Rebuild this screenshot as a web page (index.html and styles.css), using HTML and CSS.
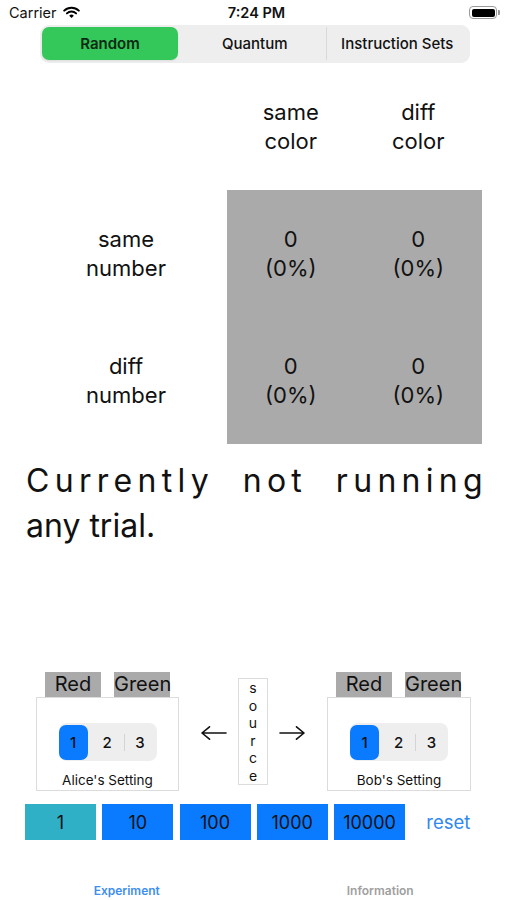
FILE: index.html
```html
<!DOCTYPE html>
<html>
<head>
<meta charset="utf-8">
<link rel="stylesheet" href="styles.css">
</head>
<body>
<div class="screen">
  <div class="status">
    <div class="status-left">
      <span class="carrier">Carrier</span>
      <svg class="wifi" width="17" height="12" viewBox="0 0 17 12">
        <path d="M1.2 4.6 A10.5 10.5 0 0 1 15.8 4.6" fill="none" stroke="#000" stroke-width="2" stroke-linecap="round"/>
        <path d="M3.9 7.4 A6.6 6.6 0 0 1 13.1 7.4" fill="none" stroke="#000" stroke-width="2" stroke-linecap="round"/>
        <path d="M6.2 9.7 A3.3 3.3 0 0 1 10.8 9.7 L8.5 12 Z" fill="#000"/>
      </svg>
    </div>
    <div class="clock">7:24 PM</div>
    <div class="status-right">
      <div class="battery"><div class="battery-fill"></div></div>
      <div class="battery-cap"></div>
    </div>
  </div>

  <div class="seg-wrap">
    <div class="seg">
      <div class="seg-item active">Random</div>
      <div class="seg-item">Quantum</div>
      <div class="seg-item divided">Instruction Sets</div>
    </div>
  </div>

  <div class="matrix">
    <div class="cell"></div>
    <div class="cell head">same<br>color</div>
    <div class="cell head">diff<br>color</div>
    <div class="cell head">same<br>number</div>
    <div class="cell data">0<br>(0%)</div>
    <div class="cell data">0<br>(0%)</div>
    <div class="cell head">diff<br>number</div>
    <div class="cell data">0<br>(0%)</div>
    <div class="cell data">0<br>(0%)</div>
  </div>

  <div class="trial">
    <div class="trial-line1"><span>Currently</span><span>not</span><span>running</span></div>
    <div class="trial-line2">any trial.</div>
  </div>

  <div class="spacer"></div>

  <div class="controls">
    <div class="panel">
      <div class="tags"><span class="tag">Red</span><span class="tag">Green</span></div>
      <div class="card">
        <div class="mini-seg">
          <div class="mini-item on">1</div>
          <div class="mini-item">2</div>
          <div class="mini-item sep">3</div>
        </div>
        <div class="card-label">Alice's Setting</div>
      </div>
    </div>
    <div class="middle">
      <svg class="arrow" width="26" height="14" viewBox="0 0 26 14">
        <path d="M1 7 H25 M8.5 0.8 L1 7 L8.5 13.2" fill="none" stroke="#111" stroke-width="1.6" stroke-linecap="round" stroke-linejoin="round"/>
      </svg>
      <div class="source">s<br>o<br>u<br>r<br>c<br>e</div>
      <svg class="arrow" width="26" height="14" viewBox="0 0 26 14">
        <path d="M1 7 H25 M17.5 0.8 L25 7 L17.5 13.2" fill="none" stroke="#111" stroke-width="1.6" stroke-linecap="round" stroke-linejoin="round"/>
      </svg>
    </div>
    <div class="panel bob">
      <div class="tags"><span class="tag">Red</span><span class="tag">Green</span></div>
      <div class="card">
        <div class="mini-seg">
          <div class="mini-item on">1</div>
          <div class="mini-item">2</div>
          <div class="mini-item sep">3</div>
        </div>
        <div class="card-label">Bob's Setting</div>
      </div>
    </div>
  </div>

  <div class="runs">
    <div class="run teal">1</div>
    <div class="run">10</div>
    <div class="run">100</div>
    <div class="run">1000</div>
    <div class="run">10000</div>
    <div class="reset">reset</div>
  </div>

  <div class="tabbar">
    <div class="tab active">Experiment</div>
    <div class="tab">Information</div>
  </div>
</div>
</body>
</html>
```

FILE: styles.css
```css
* { box-sizing: border-box; }
html, body { margin: 0; padding: 0; background: #fff; }
body {
  font-family: Inter, "Liberation Sans", sans-serif;
  color: #111;
}
.screen {
  width: 507px;
  height: 900px;
  display: flex;
  flex-direction: column;
  overflow: hidden;
}

/* status bar */
.status {
  height: 25px;
  display: flex;
  align-items: center;
  justify-content: space-between;
  padding: 0 7px 0 9px;
}
.status-left { display: flex; align-items: center; width: 120px; }
.carrier { font-size: 14.5px; color: #111; }
.wifi { margin-left: 6px; margin-top: -1px; }
.clock { font-size: 14.5px; font-weight: 600; color: #111; margin-left: 4px; }
.status-right { width: 120px; display: flex; justify-content: flex-end; align-items: center; }
.battery {
  width: 28px; height: 13px;
  border: 1px solid #9a9a9a;
  border-radius: 4px;
  padding: 1.5px;
}
.battery-fill { width: 100%; height: 100%; background: #000; border-radius: 2px; }
.battery-cap { width: 2px; height: 4.5px; background: #9a9a9a; border-radius: 0 1px 1px 0; margin-left: 1px; }

/* top segmented control */
.seg-wrap { padding: 0 37px 0 40px; }
.seg {
  height: 38px;
  background: #eeeeef;
  border-radius: 9px;
  display: flex;
  padding: 2px 2px 3px;
}
.seg-item {
  flex: 1;
  display: flex;
  align-items: center;
  justify-content: center;
  font-size: 15px;
  font-weight: 500;
  color: #111;
  border-radius: 7px;
}
.seg-item.active {
  flex: 0 0 136px;
  background: #34c759;
  font-weight: 600;
  color: #0d2a14;
  margin-right: 6px;
  box-shadow: 0 1px 2px rgba(0,0,0,0.08);
}
.seg-item.divided { border-left: 1px solid #d9d9dc; border-radius: 0 7px 7px 0; }

/* matrix */
.matrix {
  display: grid;
  grid-template-columns: 202px 127.5px 127.5px;
  grid-template-rows: repeat(3, 127px);
  margin-left: 25px;
}
.cell {
  display: flex;
  align-items: center;
  justify-content: center;
  text-align: center;
  font-size: 22px;
  line-height: 29px;
  color: #111;
}
.cell.data { background: #aaaaaa; padding-top: 1px; }

/* trial text */
.trial {
  margin-top: 14px;
  padding: 0 24px 0 26px;
  font-size: 32px;
  line-height: 45px;
  color: #111;
}
.trial-line1 {
  display: flex;
  justify-content: space-between;
  letter-spacing: 5.3px;
  margin-right: -5px;
}
.trial-line2 { letter-spacing: 0; }

.spacer { flex: 1; }

/* bottom controls */
.controls {
  display: flex;
  padding-left: 36px;
  height: 119px;
}
.panel { width: 143px; display: flex; flex-direction: column; }
.panel.bob { width: 144px; }
.tags {
  height: 25px;
  display: flex;
  justify-content: space-between;
  padding: 0 9px;
}
.bob .tags { padding: 0 10px 0 9px; }
.tag {
  width: 56px;
  background: #aaaaaa;
  font-size: 20px;
  line-height: 25px;
  text-align: center;
  color: #111;
}
.card {
  height: 94px;
  border: 1px solid #dcdcdc;
  display: flex;
  flex-direction: column;
  align-items: center;
  padding-top: 25px;
}
.mini-seg {
  width: 98px;
  height: 38px;
  background: #eeeeef;
  border-radius: 8px;
  display: flex;
  align-items: center;
}
.mini-item {
  flex: 1;
  height: 35px;
  display: flex;
  align-items: center;
  justify-content: center;
  font-size: 15px;
  font-weight: 500;
  color: #111;
}
.mini-item.on {
  flex: 0 0 29px;
  background: #0a7aff;
  border-radius: 7px;
  margin-right: 3px;
}
.mini-item.sep { position: relative; }
.mini-item.sep::before {
  content: "";
  position: absolute;
  left: 0;
  top: 9px;
  bottom: 9px;
  width: 1px;
  background: #d4d4d8;
}
.card-label {
  margin-top: 11px;
  font-size: 13.5px;
  line-height: 17px;
  color: #111;
}

.middle {
  width: 148px;
  display: flex;
  justify-content: center;
  align-items: flex-start;
  gap: 11px;
}
.arrow { margin-top: 54px; }
.source {
  margin-top: 6px;
  width: 30px;
  border: 1px solid #dcdcdc;
  text-align: center;
  font-size: 14px;
  line-height: 17.5px;
  color: #111;
}

/* run buttons */
.runs {
  margin-top: 13px;
  height: 36px;
  display: flex;
  align-items: center;
  gap: 6.25px;
  padding-left: 25px;
}
.run {
  width: 71px;
  height: 36px;
  background: #0a7aff;
  display: flex;
  align-items: center;
  justify-content: center;
  font-size: 18px;
  color: #111;
}
.run.teal { background: #30b0c7; }
.reset {
  margin-left: 15px;
  font-size: 18.5px;
  color: #2e88f0;
}

/* tab bar */
.tabbar {
  margin-top: 11px;
  height: 49px;
  display: flex;
}
.tab {
  flex: 1;
  display: flex;
  align-items: flex-end;
  justify-content: center;
  padding-bottom: 2px;
  font-size: 12px;
  font-weight: 600;
  line-height: 14px;
  color: #a0a0a0;
}
.tab.active { color: #3d8ef0; }
```
